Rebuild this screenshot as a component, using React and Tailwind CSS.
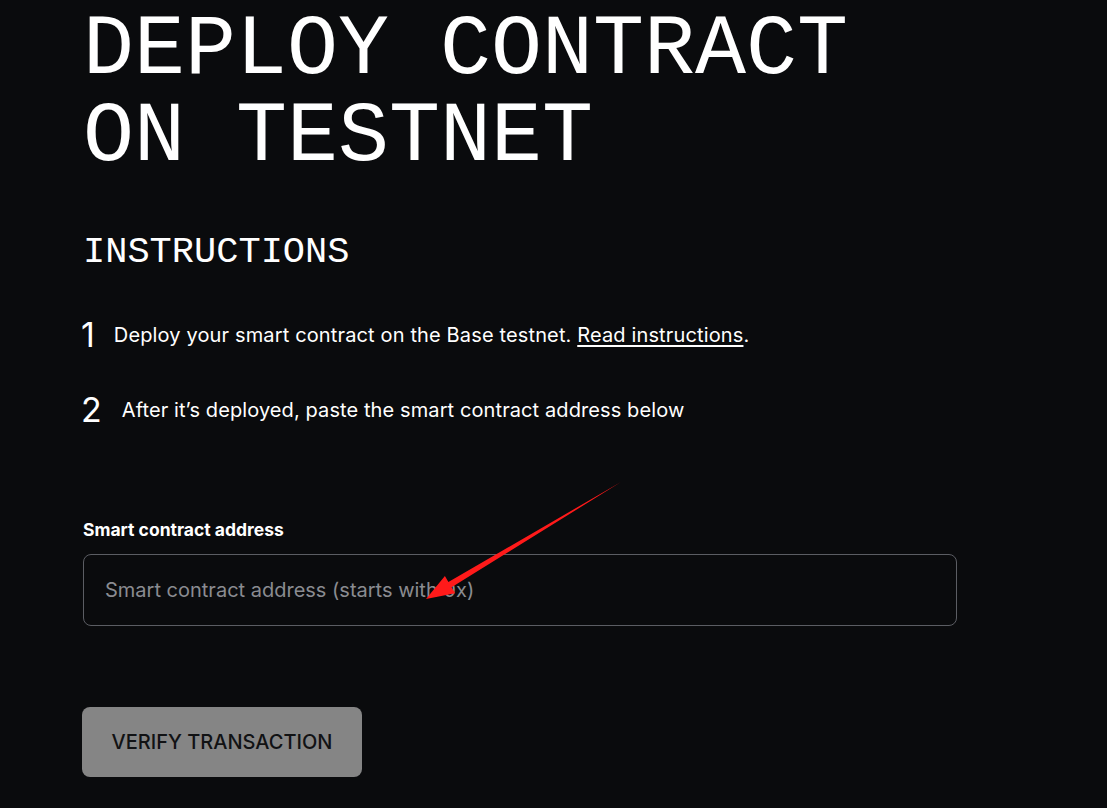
import { useState } from 'react'

const mono = { fontFamily: '"Liberation Mono", "DejaVu Sans Mono", monospace' }

function Arrow() {
  // red annotation arrow drawn over the screenshot
  return (
    <svg className="absolute inset-0 pointer-events-none" width="1107" height="808">
      <polygon
        points="621,482 451.6,587.3 455.2,593.2 426,599 444.9,576 448.4,581.9"
        fill="#ff1a1a"
      />
    </svg>
  )
}

export default function App() {
  const [address, setAddress] = useState('')

  return (
    <div className="relative min-h-screen w-full overflow-hidden bg-[#0a0b0d] text-white" style={{ fontFamily: 'Inter, "Noto Sans", sans-serif' }}>
      <div className="pl-[83px] pt-[7px]">
        <h1 className="text-[85px] leading-[87px] tracking-normal" style={mono}>
          <span className="block">DEPLOY CONTRACT</span>
          <span className="block">ON TESTNET</span>
        </h1>

        <h2 className="mt-[49px] text-[37px] leading-[44px]" style={mono}>INSTRUCTIONS</h2>

        <ol className="mt-[41px] flex flex-col gap-[35px]">
          <li className="flex items-center gap-[19px] h-[40px]">
            <span className="-ml-[2px] text-[34px] leading-none">1</span>
            <span className="text-[20px] tracking-[0.14px]">
              Deploy your smart contract on the Base testnet.{' '}
              <a href="#" className="underline underline-offset-[3px]">Read instructions</a>.
            </span>
          </li>
          <li className="flex items-center gap-[20px] h-[40px]">
            <span className="-ml-[2px] text-[34px] leading-none">2</span>
            <span className="text-[20px] tracking-[0.1px]">After it’s deployed, paste the smart contract address below</span>
          </li>
        </ol>

        <label className="mt-[90px] block text-[17.5px] font-bold leading-[20px]">Smart contract address</label>
        <input
          value={address}
          onChange={(e) => setAddress(e.target.value)}
          placeholder="Smart contract address (starts with 0x)"
          className="mt-[14px] block h-[72px] w-[874px] rounded-[8px] border border-[#5b5d63] bg-transparent px-[21px] text-[20px] text-white outline-none placeholder:text-[#8a8c91]"
        />

        <button
          disabled
          className="mt-[81px] flex h-[70px] w-[280px] -ml-px items-center justify-center rounded-[8px] bg-[#858585] text-[20px] font-medium text-[#111214]"
        >
          VERIFY TRANSACTION
        </button>
      </div>
      <Arrow />
    </div>
  )
}
